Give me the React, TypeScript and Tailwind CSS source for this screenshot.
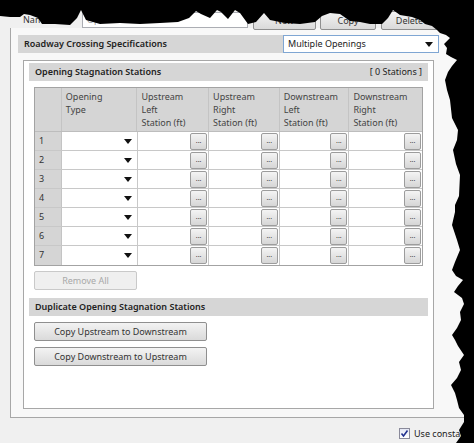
import React from 'react';

const font = { fontFamily: '"Noto Sans", "Open Sans", sans-serif' };

const columns = [
  { label: ['Opening', 'Type'], w: 'w-[76px]', kind: 'select' },
  { label: ['Upstream', 'Left', 'Station (ft)'], w: 'w-[72px]', kind: 'station' },
  { label: ['Upstream', 'Right', 'Station (ft)'], w: 'w-[71px]', kind: 'station' },
  { label: ['Downstream', 'Left', 'Station (ft)'], w: 'w-[70px]', kind: 'station' },
  { label: ['Downstream', 'Right', 'Station (ft)'], w: 'w-[73px]', kind: 'station' },
];

const rows = [1, 2, 3, 4, 5, 6, 7];

function Caret() {
  return (
    <svg width="8" height="5" viewBox="0 0 8 5">
      <path d="M0 0 H8 L4 5 Z" fill="#111" />
    </svg>
  );
}

function EllipsisButton() {
  return (
    <div className="w-[17px] h-[17px] rounded-[2px] border border-[#9c9c9c] bg-gradient-to-b from-[#f4f4f4] to-[#d6d6d6] flex items-center justify-center text-[7px] leading-none text-[#444] pb-[2px]">
      ...
    </div>
  );
}

function StationsTable() {
  return (
    <div className="mx-[5px] mt-[6px] border border-[#a3a3a3] w-[389px]">
      {/* header */}
      <div className="flex h-[44px] bg-[#d5d5d5] border-b border-[#bdbdbd]">
        <div className="w-[27px] border-r border-[#c4c4c4]" />
        {columns.map((c, i) => (
          <div
            key={i}
            className={`${c.w} border-r border-[#c4c4c4] last:border-r-0 px-[4px] pt-[2px] text-[9px] leading-[13px] text-[#444]`}
          >
            {c.label.map((l) => (
              <div key={l}>{l}</div>
            ))}
          </div>
        ))}
      </div>
      {rows.map((r) => (
        <div key={r} className="flex h-[19px] border-b border-[#c8c8c8] last:border-b-0">
          <div className="w-[27px] bg-[#d5d5d5] border-r border-[#c4c4c4] px-[4px] text-[9px] leading-[18px] text-[#333]">
            {r}
          </div>
          {columns.map((c, i) => (
            <div
              key={i}
              className={`${c.w} bg-white border-r border-[#c8c8c8] last:border-r-0 flex items-center justify-end pr-[1px]`}
            >
              {c.kind === 'select' ? (
                <div className="pr-[4px] flex items-center">
                  <Caret />
                </div>
              ) : (
                <EllipsisButton />
              )}
            </div>
          ))}
        </div>
      ))}
    </div>
  );
}

function GrayButton({ children, disabled }: { children: React.ReactNode; disabled?: boolean }) {
  return (
    <div
      className={`h-[19px] rounded-[2px] border flex items-center justify-center text-[9px] leading-none ${
        disabled
          ? 'border-[#c9c9c9] bg-[#efefef] text-[#a8a8a8]'
          : 'border-[#8f8f8f] bg-gradient-to-b from-[#f3f3f3] to-[#dadada] text-[#333]'
      }`}
    >
      {children}
    </div>
  );
}

function TornEdge() {
  const pts = [
    [0, 0], [474, 0], [474, 443],
    [456, 443], [461, 436], [459, 430], [464, 422], [464, 415], [459, 408], [457, 400], [455, 393],
    [451, 385], [457, 378], [461, 370], [459, 362], [464, 355], [458, 346], [455, 340], [452, 335],
    [457, 328], [461, 320], [460, 312], [464, 304], [462, 298], [454, 292], [458, 286], [463, 280],
    [456, 276], [452, 270], [455, 262], [460, 250], [457, 240], [452, 225], [455, 212], [455, 205],
    [459, 196], [460, 175], [456, 164], [453, 150], [457, 140], [458, 130], [452, 118], [450, 100],
    [447, 90], [445, 80], [448, 72], [452, 66], [457, 60], [451, 57], [446, 54], [447, 48],
    [444, 44], [450, 38], [446, 35], [440, 33], [437, 30],
    [432, 26], [425, 24], [420, 20], [412, 17], [400, 15], [393, 10], [388, 18], [382, 24], [370, 24],
    [360, 22], [350, 21], [340, 14], [330, 13], [322, 16], [315, 22], [300, 24], [285, 23], [270, 20],
    [264, 13], [256, 22], [248, 24], [240, 13], [235, 10], [228, 19], [221, 12], [217, 10], [210, 18],
    [201, 14], [196, 11], [189, 18], [178, 22], [160, 23], [140, 24], [120, 23], [100, 24], [86, 20],
    [81, 10], [77, 18], [70, 25], [55, 24], [42, 24], [38, 18], [30, 15], [24, 14], [20, 17], [10, 17],
    [0, 16],
  ];
  return (
    <svg className="absolute inset-0 pointer-events-none" width="474" height="443" viewBox="0 0 474 443">
      <polygon points={pts.map((p) => p.join(',')).join(' ')} fill="#000" />
    </svg>
  );
}

export default function App() {
  return (
    <div className="relative w-[474px] h-[443px] overflow-hidden bg-[#f0f0f0]" style={font}>
      {/* top toolbar (mostly hidden by the torn edge) */}
      <div className="flex items-center h-[16px] mt-[12px] pl-[23px] text-[9px] text-[#333]">
        <div className="w-[59px]">Name:</div>
        <div className="w-[166px] h-[16px] border border-[#abadb3] bg-white px-[4px] text-[#999] leading-[14px]">
          Optional...
        </div>
        <div className="ml-[5px] w-[63px]">
          <GrayButton>New</GrayButton>
        </div>
        <div className="ml-[4px] w-[56px]">
          <GrayButton>Copy</GrayButton>
        </div>
        <div className="ml-[5px] w-[57px]">
          <GrayButton>Delete</GrayButton>
        </div>
      </div>

      {/* outer panel */}
      <div className="ml-[10px] border-l border-b border-[#a7a7a7] bg-[#f8f8f8] pl-[7px] pt-[7px] pb-[8px] w-[500px]">
        <div className="flex items-center h-[18px] w-[421px] bg-[#d6d6d6]">
          <div className="flex-1 pl-[6px] text-[9px] font-semibold text-[#222]">
            Roadway Crossing Specifications
          </div>
          <div className="w-[156px] h-[18px] bg-white border border-[#7fa6d3] flex items-center justify-between pl-[4px] pr-[5px] text-[9px] text-[#222]">
            <span>Multiple Openings</span>
            <Caret />
          </div>
        </div>

        {/* inner group */}
        <div className="ml-[5px] mt-[7px] w-[411px] h-[349px] border border-[#a7a7a7] bg-white px-[5px] pt-[2px]">
          <div className="flex items-center justify-between h-[18px] bg-[#d6d6d6] px-[6px] text-[9px] font-semibold text-[#222]">
            <span>Opening Stagnation Stations</span>
            <span className="font-normal">[ 0 Stations ]</span>
          </div>

          <StationsTable />

          <div className="mx-[5px] mt-[5px] w-[103px]">
            <GrayButton disabled>Remove All</GrayButton>
          </div>

          <div className="mt-[8px] flex items-center h-[18px] bg-[#d6d6d6] px-[6px] text-[9px] font-semibold text-[#222]">
            Duplicate Opening Stagnation Stations
          </div>

          <div className="mx-[5px] mt-[6px] w-[173px] flex flex-col gap-[6px]">
            <GrayButton>Copy Upstream to Downstream</GrayButton>
            <GrayButton>Copy Downstream to Upstream</GrayButton>
          </div>
        </div>
      </div>

      {/* bottom checkbox */}
      <div className="flex items-center justify-end mt-[9px]">
        <div className="flex items-center gap-[4px] w-[75px] text-[9px] text-[#222]">
          <div className="w-[11px] h-[11px] border border-[#8a8a9a] bg-gradient-to-b from-[#e4e7f5] to-[#ffffff] flex items-center justify-center">
            <svg width="9" height="9" viewBox="0 0 9 9">
              <path d="M1.5 4.5 L3.5 7 L7.5 1.5" stroke="#21318f" strokeWidth="1.6" fill="none" />
            </svg>
          </div>
          <span className="whitespace-nowrap">Use constant</span>
        </div>
      </div>

      <TornEdge />
    </div>
  );
}
